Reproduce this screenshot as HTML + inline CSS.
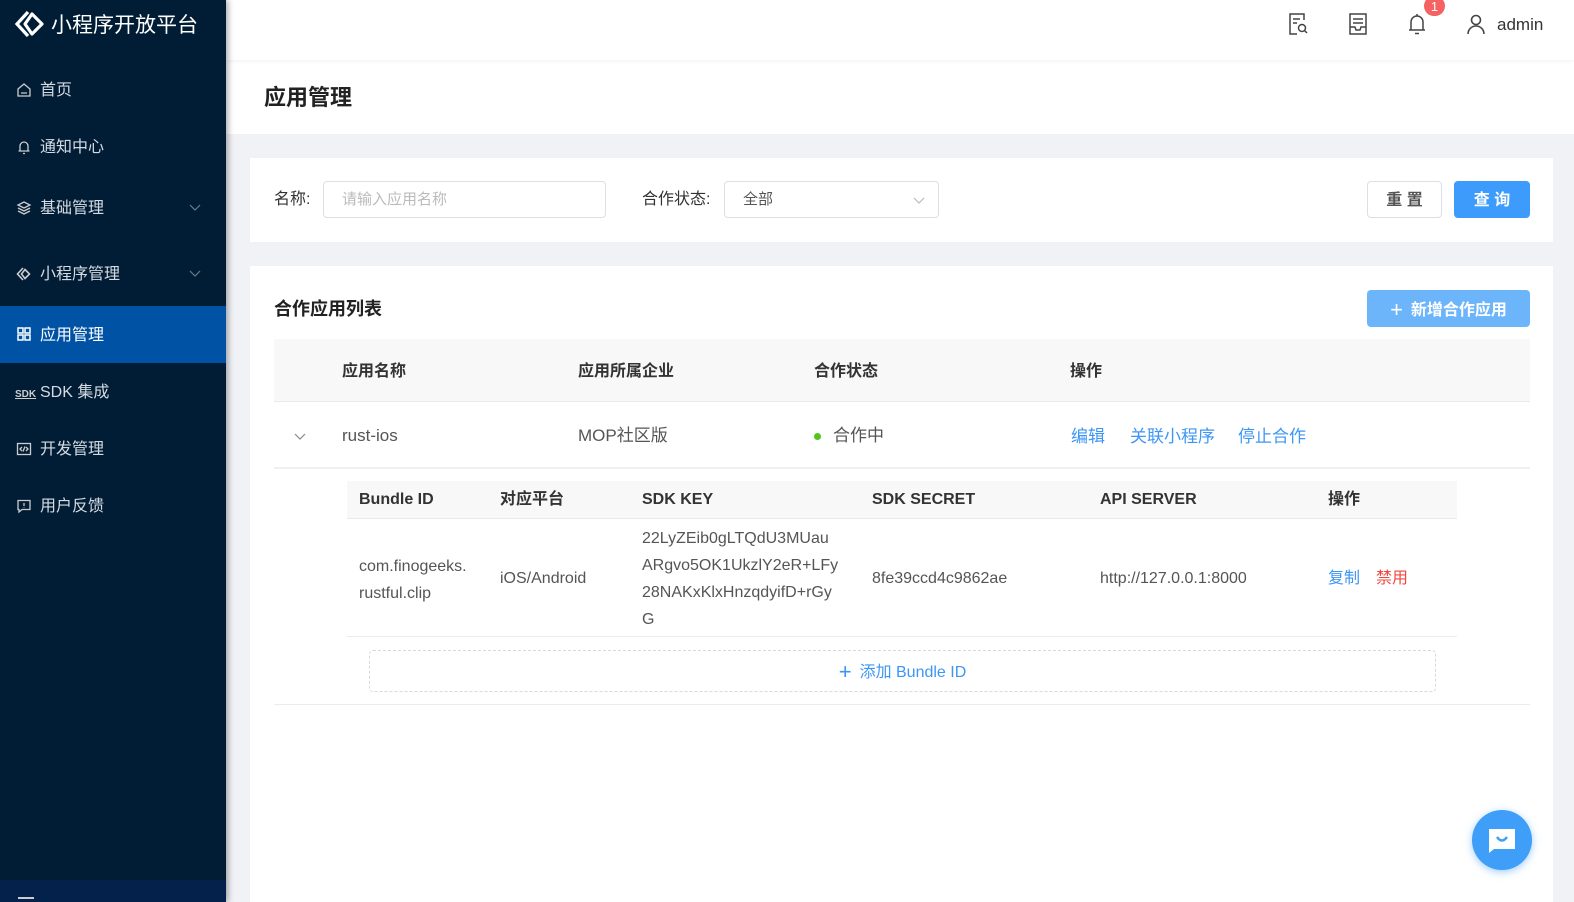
<!DOCTYPE html>
<html><head><meta charset="utf-8">
<style>
*{margin:0;padding:0;box-sizing:border-box}
body{width:1574px;height:902px;overflow:hidden;background:#f0f2f5;font-family:"Liberation Sans","Noto Sans CJK SC",sans-serif;position:relative;color:#333;line-height:24px}
.a{position:absolute;white-space:nowrap}
#side{position:absolute;left:0;top:0;width:226px;height:902px;background:#001d35;box-shadow:2px 0 6px rgba(0,0,0,.35);z-index:3}
.mi{position:absolute;left:0;width:226px;height:56px;color:#d6dbe2;font-size:16px;line-height:58px;padding-left:40px}
.mi svg{position:absolute;left:16px;top:20px}
.mi svg.ch{left:189px;top:24px}
.th{font-weight:bold;font-size:16px;color:#333}
.td{font-size:16px;color:#555}
.lk{color:#3d96f5;font-size:16px}
</style></head><body>
<div id="side">
  <div class="a" style="left:14px;top:8px;">
    <svg width="32" height="32" viewBox="0 0 32 32" fill="none" stroke="#fff" stroke-width="3.2"><path d="M14 4 L3 16 L14 28"/><path d="M18 6 L28 16 L18 26 L11 16 Z" stroke-linejoin="round"/></svg>
  </div>
  <div class="a" style="left:51px;top:11px;color:#fff;font-size:21px;line-height:30px">小程序开放平台</div>
  <div class="mi" style="top:62px"><svg width="16" height="16" viewBox="0 0 16 16" fill="none" stroke="#ccc" stroke-width="1.3"><path d="M2 7 L8 2 L14 7 V14 H2 Z M5 11 H11"/></svg>首页</div>
  <div class="mi" style="top:119px"><svg width="16" height="16" viewBox="0 0 16 16" fill="none" stroke="#ccc" stroke-width="1.3"><path d="M4 12 V7 a4 4 0 0 1 8 0 V12 Z M2.5 12 H13.5 M7 14.5 H9"/></svg>通知中心</div>
  <div class="mi" style="top:180px"><svg width="16" height="16" viewBox="0 0 16 16" fill="none" stroke="#ccc" stroke-width="1.3"><path d="M8 2 L14 5 L8 8 L2 5 Z M2 8 L8 11 L14 8 M2 11 L8 14 L14 11"/></svg>基础管理<svg class="ch" width="12" height="8" viewBox="0 0 12 8" fill="none" stroke="#6d7a89" stroke-width="1.2"><path d="M1 1 L6 6 L11 1"/></svg></div>
  <div class="mi" style="top:246px"><svg width="16" height="16" viewBox="0 0 16 16" fill="none" stroke="#ccc" stroke-width="1.6"><path d="M7 2 L1.5 8 L7 14 M9 3.5 L13.5 8 L9 12.5 L5.5 8 Z"/></svg>小程序管理<svg class="ch" width="12" height="8" viewBox="0 0 12 8" fill="none" stroke="#6d7a89" stroke-width="1.2"><path d="M1 1 L6 6 L11 1"/></svg></div>
  <div class="mi" style="top:306px;background:#0052a5;color:#fff;height:57px;line-height:59px"><svg width="16" height="16" viewBox="0 0 16 16" fill="none" stroke="#fff" stroke-width="1.5"><rect x="2" y="2" width="5" height="5"/><rect x="9" y="2" width="5" height="5"/><rect x="2" y="9" width="5" height="5"/><rect x="9" y="9" width="5" height="5"/></svg>应用管理</div>
  <div class="mi" style="top:364px"><span class="a" style="left:15px;top:2px;font-size:10px;color:#ccc;text-decoration:underline;font-weight:bold">SDK</span>SDK 集成</div>
  <div class="mi" style="top:421px"><svg width="16" height="16" viewBox="0 0 16 16" fill="none" stroke="#ccc" stroke-width="1.3"><rect x="1.5" y="2.5" width="13" height="11"/><path d="M6 6 L4 8 L6 10 M10 6 L12 8 L10 10 M9 5.5 L7 10.5"/></svg>开发管理</div>
  <div class="mi" style="top:478px"><svg width="16" height="16" viewBox="0 0 16 16" fill="none" stroke="#ccc" stroke-width="1.3"><path d="M2 2.5 H14 V11.5 H6 L3 14 V11.5 H2 Z M8 5 V8 M8 9.5 V10"/></svg>用户反馈</div>
  <div class="a" style="left:0;top:880px;width:226px;height:22px;background:#03214a"></div>
  <div class="a" style="left:18px;top:897px;width:16px;height:2px;background:#ccc"></div>
</div>
<div class="a" style="left:226px;top:0;width:1348px;height:60px;background:#fff;box-shadow:0 1px 4px rgba(0,0,0,.06);z-index:2"></div>
<svg class="a" style="left:1288px;top:12px;z-index:2" width="22" height="24" viewBox="0 0 22 24" fill="none" stroke="#444" stroke-width="1.5"><path d="M16 8 V2 H2 V22 H9 M5 7 H12 M5 11 H9"/><circle cx="14" cy="16" r="3.5"/><path d="M16.5 18.5 L19 21"/></svg>
<svg class="a" style="left:1348px;top:12px;z-index:2" width="20" height="24" viewBox="0 0 20 24" fill="none" stroke="#444" stroke-width="1.5"><path d="M2 2 H18 V22 H2 Z M5 7 H15 M5 11 H15 M2 15 H7 L8 18 H12 L13 15 H18"/></svg>
<svg class="a" style="left:1407px;top:12px;z-index:2" width="20" height="24" viewBox="0 0 20 24" fill="none" stroke="#444" stroke-width="1.5"><path d="M4 18 V10 a6 6 0 0 1 12 0 V18 Z M2 18 H18 M8 21.5 H12 M10 2 V4"/></svg>
<div class="a" style="left:1424px;top:-4px;width:21px;height:20px;border-radius:10px;background:#f56262;color:#fff;font-size:13px;text-align:center;line-height:22px;z-index:2">1</div>
<svg class="a" style="left:1465px;top:13px;z-index:2" width="22" height="22" viewBox="0 0 22 22" fill="none" stroke="#444" stroke-width="1.6"><circle cx="11" cy="7" r="4.5"/><path d="M3 21 a8 8 0 0 1 16 0"/></svg>
<div class="a" style="left:1497px;top:13px;font-size:17px;color:#333;z-index:2">admin</div>
<div class="a" style="left:226px;top:60px;width:1348px;height:74px;background:#fff"></div>
<div class="a" style="left:264px;top:84px;font-size:22px;line-height:28px;font-weight:bold;color:#222">应用管理</div>
<div class="a" style="left:250px;top:158px;width:1303px;height:84px;background:#fff"></div>
<div class="a" style="left:274px;top:188px;font-size:16px;color:#333">名称:</div>
<div class="a" style="left:323px;top:181px;width:283px;height:37px;border:1px solid #dcdfe6;border-radius:4px;font-size:15px;color:#bbb;padding:6px 18px">请输入应用名称</div>
<div class="a" style="left:642px;top:188px;font-size:16px;color:#333">合作状态:</div>
<div class="a" style="left:724px;top:181px;width:215px;height:37px;border:1px solid #dcdfe6;border-radius:4px;font-size:15px;color:#555;padding:6px 18px">全部<svg class="a" style="left:188px;top:15px" width="12" height="8" viewBox="0 0 12 8" fill="none" stroke="#bbb" stroke-width="1.2"><path d="M1 1 L6 6 L11 1"/></svg></div>
<div class="a" style="left:1367px;top:181px;width:75px;height:37px;border:1px solid #dcdfe6;border-radius:4px;font-size:16px;font-weight:bold;color:#555;text-align:center;line-height:37px">重 置</div>
<div class="a" style="left:1454px;top:181px;width:76px;height:37px;background:#3d9bfb;border-radius:4px;font-size:16px;font-weight:bold;color:#fff;text-align:center;line-height:39px">查 询</div>
<div class="a" style="left:250px;top:266px;width:1303px;height:636px;background:#fff"></div>
<div class="a" style="left:274px;top:297px;font-size:18px;font-weight:bold;color:#222">合作应用列表</div>
<div class="a" style="left:1367px;top:290px;width:163px;height:37px;background:#6cb5fb;border-radius:4px;font-size:16px;font-weight:bold;color:#fff;text-align:center;line-height:39px"><span style="font-weight:normal;font-size:22px;vertical-align:-2px;margin-right:8px">+</span>新增合作应用</div>
<div class="a" style="left:274px;top:339px;width:1256px;height:63px;background:#f8f8f9;border-bottom:1px solid #e8eaee"></div>
<div class="a th" style="left:342px;top:360px">应用名称</div>
<div class="a th" style="left:578px;top:360px">应用所属企业</div>
<div class="a th" style="left:814px;top:360px">合作状态</div>
<div class="a th" style="left:1070px;top:360px">操作</div>
<svg class="a" style="left:294px;top:433px" width="12" height="8" viewBox="0 0 12 8" fill="none" stroke="#888" stroke-width="1.2"><path d="M1 1 L6 6 L11 1"/></svg>
<div class="a td" style="left:342px;top:424px;font-size:17px">rust-ios</div>
<div class="a td" style="left:578px;top:424px;font-size:17px">MOP社区版</div>
<div class="a" style="left:814px;top:433px;width:7px;height:7px;border-radius:50%;background:#52c41a"></div>
<div class="a td" style="left:833px;top:424px;font-size:17px">合作中</div>
<div class="a lk" style="left:1071px;top:425px;font-size:17px">编辑</div>
<div class="a lk" style="left:1130px;top:425px;font-size:17px">关联小程序</div>
<div class="a lk" style="left:1238px;top:425px;font-size:17px">停止合作</div>
<div class="a" style="left:274px;top:467px;width:1256px;height:2px;background:#eef0f4"></div>
<div class="a" style="left:347px;top:481px;width:1110px;height:38px;background:#f8f8f9;border-bottom:1px solid #e8eaee"></div>
<div class="a th" style="left:359px;top:488px">Bundle ID</div>
<div class="a th" style="left:500px;top:488px">对应平台</div>
<div class="a th" style="left:642px;top:488px">SDK KEY</div>
<div class="a th" style="left:872px;top:488px">SDK SECRET</div>
<div class="a th" style="left:1100px;top:488px">API SERVER</div>
<div class="a th" style="left:1328px;top:488px">操作</div>
<div class="a td" style="left:359px;top:553px;line-height:27px;white-space:normal">com.finogeeks.<br>rustful.clip</div>
<div class="a td" style="left:500px;top:567px">iOS/Android</div>
<div class="a td" style="left:642px;top:525px;line-height:27px">22LyZEib0gLTQdU3MUau<br>ARgvo5OK1UkzlY2eR+LFy<br>28NAKxKlxHnzqdyifD+rGy<br>G</div>
<div class="a td" style="left:872px;top:567px">8fe39ccd4c9862ae</div>
<div class="a td" style="left:1100px;top:567px">http://127.0.0.1:8000</div>
<div class="a lk" style="left:1328px;top:567px">复制</div>
<div class="a" style="left:1376px;top:567px;color:#f0483f;font-size:16px">禁用</div>
<div class="a" style="left:347px;top:636px;width:1110px;height:1px;background:#eaecf0"></div>
<div class="a" style="left:369px;top:650px;width:1067px;height:42px;border:1px dashed #d6d9de;border-radius:4px;text-align:center;line-height:42px;font-size:16px;color:#3d96f5"><span style="font-size:22px;vertical-align:-2px;margin-right:8px">+</span>添加 Bundle ID</div>
<div class="a" style="left:274px;top:704px;width:1256px;height:1px;background:#eaecf0"></div>
<div class="a" style="left:1472px;top:810px;width:60px;height:60px;border-radius:50%;background:#3e9ef8;box-shadow:0 2px 8px rgba(62,158,248,.5)"></div>
<svg class="a" style="left:1488px;top:828px" width="28" height="26" viewBox="0 0 28 26"><path d="M1 1 H27 V21 H6 L1 25 Z" fill="#fff"/><path d="M9 9 Q14 16 19 9" stroke="#3e9ef8" stroke-width="2.4" fill="none"/></svg>
</body></html>
